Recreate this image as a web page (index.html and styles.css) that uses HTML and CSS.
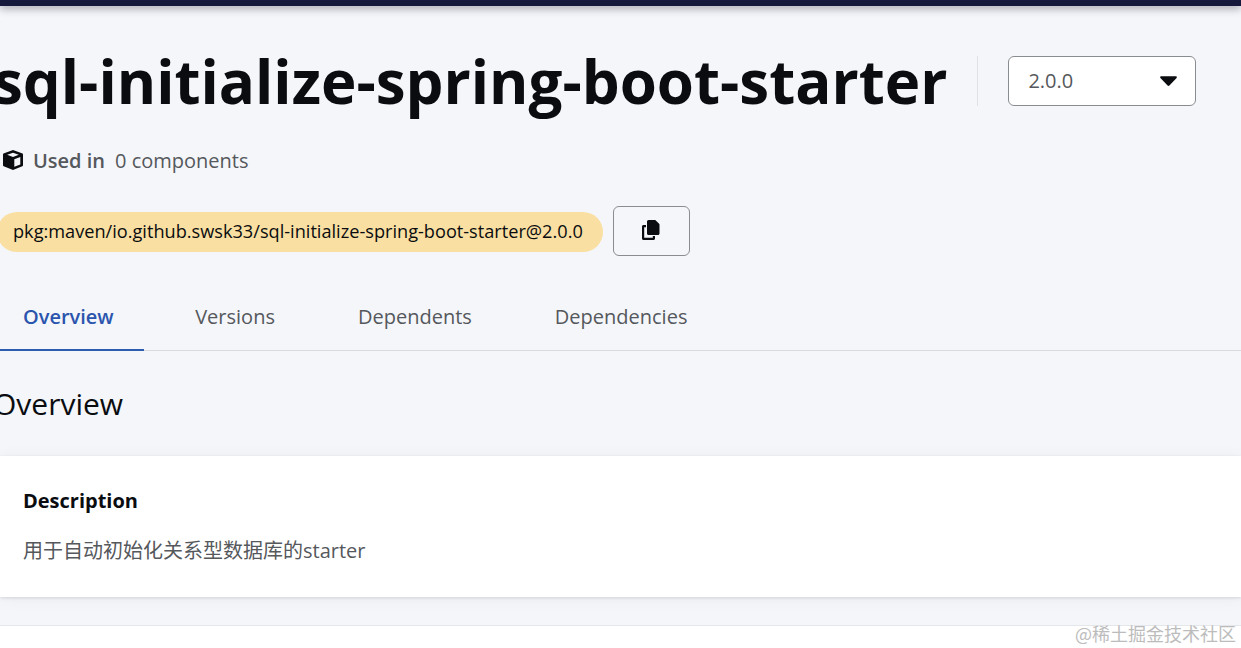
FILE: index.html
```html
<!DOCTYPE html>
<html lang="en">
<head>
<meta charset="utf-8">
<title>sql-initialize-spring-boot-starter</title>
<link rel="stylesheet" href="styles.css">
</head>
<body>
<div class="topbar"></div>
<main class="main">
  <div class="title-row">
    <h1 class="title">sql-initialize-spring-boot-starter</h1>
    <div class="divider"></div>
    <button class="select" type="button">
      <span>2.0.0</span>
      <svg class="caret" width="17" height="10" viewBox="0 0 17 10"><path d="M1.300.2h14.400c1 0 1.500 1.100.9 1.800L9.400 9.500c-.5.600-1.300.600-1.800 0L.4 2C-.2 1.300.3.200 1.300.2z"/></svg>
    </button>
  </div>
  <div class="used">
    <svg class="cube" width="20" height="20" viewBox="0 0 20 20"><path fill-rule="evenodd" d="M10 0l9.500 3.600c.4.200.5.500.5.900v10.800c0 .500-.3.900-.7 1L10 20 .7 16.300c-.4-.1-.7-.5-.7-1V4.500c0-.4.200-.7.500-.9L10 0zM10 2.700L4.200 4.800 10 7l5.800-2.200L10 2.700zM11.300 9.200v7.600l6-2.400V6.900l-6 2.300z"/></svg>
    <strong class="used-label">Used in</strong>
    <span class="used-count">0 components</span>
  </div>
  <div class="purl-row">
    <span class="purl">pkg:maven/io.github.swsk33/sql-initialize-spring-boot-starter@2.0.0</span>
    <button class="copy" type="button">
      <svg width="18" height="20" viewBox="0 0 18 20"><path d="M6.500 0h6.200c.4 0 .8.200 1.100.4l3.300 3.400c.3.300.4.700.4 1.100v8.500c0 .8-.7 1.600-1.500 1.600H6.500c-.8 0-1.500-.8-1.500-1.600V1.600C5 .8 5.700 0 6.500 0z"/><path d="M1.500 5H4v2.200H2.200v10.600h8.600V16H13v2.500c0 .8-.7 1.500-1.500 1.500h-10C.7 20 0 19.300 0 18.500v-12C0 5.700.7 5 1.500 5z"/></svg>
    </button>
  </div>
  <nav class="tabs">
    <a class="tab active">Overview</a>
    <a class="tab">Versions</a>
    <a class="tab">Dependents</a>
    <a class="tab">Dependencies</a>
  </nav>
  <h2 class="section">Overview</h2>
</main>
<section class="card">
  <h3 class="card-title">Description</h3>
  <p class="card-text">用于自动初始化关系型数据库的starter</p>
</section>
<footer class="footer"><span class="mark">@稀土掘金技术社区</span></footer>
</body>
</html>
```
FILE: styles.css
```css
* { box-sizing: border-box; }
html, body { margin: 0; height: 648px; overflow: hidden; }
body {
  background: #f4f6fa;
  font-family: "Open Sans", "Noto Sans CJK SC", sans-serif;
  display: flex;
  flex-direction: column;
  color: #0a0c10;
}
.topbar {
  height: 6px;
  flex: none;
  background: #151a3d;
  box-shadow: 0 2px 8px rgba(20, 25, 45, .45);
}
.main { margin-left: -1px; flex: none; }
.title-row { display: flex; align-items: center; margin: 40px 0 0 -6px; height: 70px; }
.title { margin: 0; font-size: 60px; line-height: 70px; font-weight: 700; white-space: nowrap; letter-spacing: 0; }
.divider { width: 1px; height: 50px; margin: 0 30px; background: #dfe1e6; }
.select {
  width: 188px; height: 50px; margin-top: -1px;
  display: flex; align-items: center; justify-content: space-between;
  padding: 0 18px 0 19px;
  background: #fff; border: 1px solid #8a8d90; border-radius: 6px;
  font: 400 20px "Open Sans", sans-serif; color: #55585c;
}
.caret { fill: #0a0c10; }
.used { display: flex; align-items: center; margin: 33px 0 0 4px; height: 22px; font-size: 20px; color: #55585c; }
.cube { fill: #0a0c10; flex: none; margin-right: 10px; }
.used-label { font-weight: 600; margin-right: 10px; }
.purl-row { display: flex; align-items: flex-end; margin: 35px 0 0 -2px; height: 50px; }
.purl {
  height: 40px; line-height: 38px; padding: 0 20px 0 16px; margin-bottom: 4px;
  background: #f9e0a2; border-radius: 20px; font-size: 18.160px; color: #0a0c10; white-space: nowrap;
}
.copy {
  width: 77px; height: 50px; margin-left: 10px;
  display: flex; align-items: center; justify-content: center;
  background: transparent; border: 1px solid #8a8d90; border-radius: 6px;
}
.copy svg { fill: #0a0c10; margin-top: -2px; }
.tabs { display: flex; border-bottom: 1px solid #d8dadf; margin: 35px -1px 0 0; height: 60px; }
.tab { padding: 0 24px; margin-right: 35px; line-height: 52px; font-size: 20px; color: #55585c; height: 60px; }
.tab.active { color: #2b55ad; font-weight: 600; border-bottom: 2px solid #2b5cad; margin-right: 27.500px; padding-right: 30px; }
.section { margin: 33px 0 0 -6px; font-size: 30px; font-weight: 400; line-height: 40px; height: 72px; }
.card {
  flex: none; height: 141px; background: #fff; padding: 32px 23px;
  box-shadow: 0 1px 3px rgba(20, 25, 45, .13), 0 2px 16px rgba(20, 25, 45, .05);
}
.card-title { margin: 0; font-size: 20px; font-weight: 700; line-height: 26px; }
.card-text { margin: 24px 0 0; font-size: 20px; line-height: 26px; color: #55585c; }
.footer {
  margin-top: 28px; flex: 1; background: #fff; border-top: 1px solid #e4e6ea;
  display: flex; justify-content: flex-end; position: relative;
}
.mark { position: absolute; right: 5px; top: -5px; font-size: 18px; line-height: 24px; color: #bcbcbc; font-family: "Noto Sans CJK SC", sans-serif; }
```
